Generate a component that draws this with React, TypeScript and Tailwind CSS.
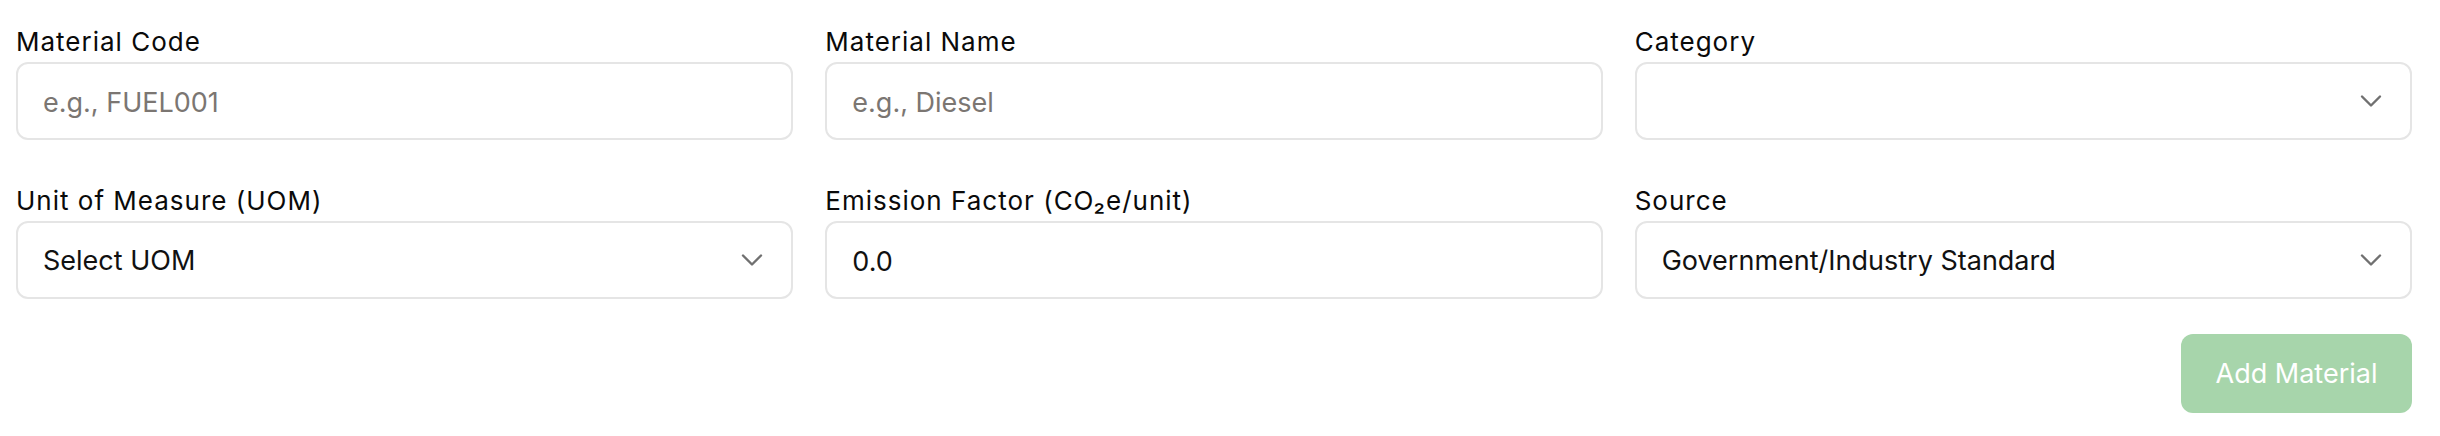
import React from 'react';
import { ChevronDown } from 'lucide-react';

const font = { fontFamily: 'Inter, "Noto Sans", sans-serif' };

const Label = ({ children }: { children: React.ReactNode }) => (
  <label className="block text-[26px] leading-[30px] tracking-[1px] font-normal text-[#0a0a0a] mb-[5px]">{children}</label>
);

const TextField = ({ placeholder, value }: { placeholder?: string; value?: string }) => (
  <input
    type="text"
    placeholder={placeholder}
    defaultValue={value}
    className="w-full h-[78px] rounded-[12px] border-2 border-[#e5e5e5] bg-white px-[25px] pt-[3px] text-[27px] text-[#111111] placeholder:text-[#7b7672] outline-none"
  />
);

const SelectField = ({ value }: { value?: string }) => (
  <div className="w-full h-[78px] rounded-[12px] border-2 border-[#e5e5e5] bg-white pl-[25px] pr-[21px] flex items-center justify-between">
    <span className="text-[27px] text-[#111111] pt-[3px]">{value}</span>
    <ChevronDown size={36} strokeWidth={1.6} className="text-[#707070]" />
  </div>
);

export default function App() {
  return (
    <div style={font} className="w-[2440px] h-[436px] bg-white pl-4 pr-[28px] pt-[27px]">
      <div className="grid grid-cols-3 gap-x-8 gap-y-[46px]">
        <div>
          <Label>Material Code</Label>
          <TextField placeholder="e.g., FUEL001" />
        </div>
        <div>
          <Label>Material Name</Label>
          <TextField placeholder="e.g., Diesel" />
        </div>
        <div>
          <Label>Category</Label>
          <SelectField />
        </div>
        <div>
          <Label>Unit of Measure (UOM)</Label>
          <SelectField value="Select UOM" />
        </div>
        <div>
          <Label>Emission Factor (CO₂e/unit)</Label>
          <TextField value="0.0" />
        </div>
        <div>
          <Label>Source</Label>
          <SelectField value="Government/Industry Standard" />
        </div>
      </div>
      <div className="flex justify-end mt-[35px]">
        <button
          disabled
          className="h-[79px] w-[231px] rounded-[12px] bg-[#a7d5ab] text-white text-[27px] pt-[2px]"
        >
          Add Material
        </button>
      </div>
    </div>
  );
}
